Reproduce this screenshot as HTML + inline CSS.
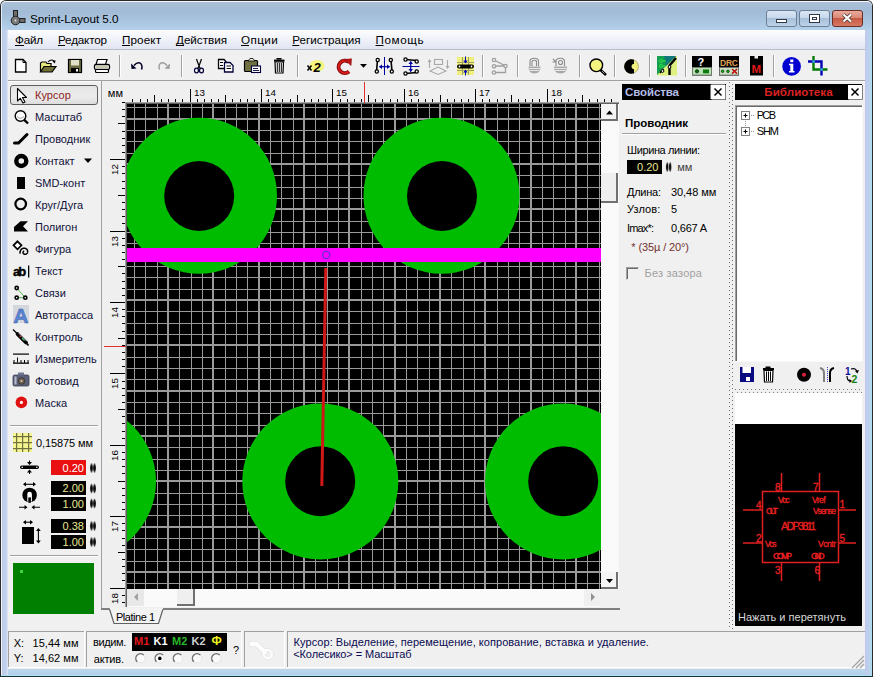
<!DOCTYPE html>
<html><head><meta charset="utf-8">
<style>
*{margin:0;padding:0;box-sizing:border-box}
html,body{width:873px;height:677px;overflow:hidden;background:#fff}
body{position:relative;font-family:"Liberation Sans",sans-serif;font-size:11px;color:#000}
.a{position:absolute}
svg{position:absolute;left:0;top:0;overflow:visible}
text{font-family:"Liberation Sans",sans-serif}
.wbtn{position:absolute;top:10px;height:17px;border:1px solid #6d7f94;border-radius:3px;background:linear-gradient(#d9e6f5 0%,#c8d9ed 45%,#a8bfd9 50%,#bdd3ea 100%)}
</style></head><body>
<div class="a" style="left:0;top:0;width:873px;height:677px;background:#bad2ea;border:1px solid #2b2b2b;border-bottom:none;border-radius:6px 6px 0 0"></div>
<div class="a" style="left:1px;top:1px;width:871px;height:29px;background:linear-gradient(#abc0d7 0%,#a2bbd6 35%,#a9c4df 65%,#b5d0eb 100%);border-radius:5px 5px 0 0;border-top:1px solid #f4f8fc;border-left:1px solid #e4eef8"></div>
<div class="a" style="left:1px;top:669px;width:871px;height:8px;background:linear-gradient(#bcd6ee,#b0cce8)"></div>
<div class="a" style="left:1px;top:675px;width:871px;height:1px;background:#a4e4f0"></div>
<div class="a" style="left:0;top:676px;width:873px;height:1px;background:#203038"></div>
<div class="a" style="left:1px;top:30px;width:7px;height:645px;background:linear-gradient(to right,#f0f6fc 0%,#f0f6fc 14%,#bccae8 15%,#c6d4ee 80%,#e4ecf8 100%)"></div>
<div class="a" style="left:865px;top:30px;width:7px;height:645px;background:linear-gradient(to right,#c2c8ea 0%,#bcd0ee 50%,#b0dcee 100%)"></div>
<div class="wbtn" style="left:766px;width:31px"><div class="a" style="left:9px;top:8px;width:11px;height:4px;background:#fff;border:1px solid #303a48"></div></div>
<div class="wbtn" style="left:799px;width:31px"><div class="a" style="left:9px;top:3px;width:11px;height:9px;border:1px solid #303a48;background:#fff"><div class="a" style="left:2px;top:2px;width:5px;height:3px;border:1px solid #303a48"></div></div></div>
<div class="wbtn" style="left:832px;width:31px;border-color:#6b2e25;background:linear-gradient(#eaaa9c 0%,#d98a78 45%,#c65a44 50%,#d77a64 100%)"><svg width="29" height="15" viewBox="0 0 29 15"><path d="M10.5 3.5 L18 10.5 M18 3.5 L10.5 10.5" stroke="#40302c" stroke-width="3.6"/><path d="M10.5 3.5 L18 10.5 M18 3.5 L10.5 10.5" stroke="#fff" stroke-width="2.2"/></svg></div>
<div class="a" style="left:8px;top:30px;width:857px;height:20px;background:linear-gradient(#fdfdfe 0%,#f0f2f9 45%,#dfe4f1 100%)"></div>
<div class="a" style="left:8px;top:49px;width:857px;height:1px;background:#b9bdc8"></div>
<div class="a" style="left:8px;top:50px;width:857px;height:619px;background:#f0f0f0"></div>
<svg width="40" height="30" viewBox="0 0 40 30">
<rect x="13.5" y="10.5" width="4" height="8" fill="#6c6c6c" stroke="#202020" stroke-width="1"/>
<rect x="18" y="18.5" width="7" height="4" fill="#6c6c6c" stroke="#202020" stroke-width="1"/>
<circle cx="15.5" cy="20.5" r="4.3" fill="#7a7a7a" stroke="#202020" stroke-width="1"/>
<circle cx="15.5" cy="20.5" r="0.9" fill="#e0e0e0"/>
</svg>
<svg class="a" style="left:0;top:0" width="873" height="81" viewBox="0 0 873 81">
<!-- separators -->
<g fill="#a0a0a0">
<rect x="119" y="55" width="1" height="22"/><rect x="181" y="55" width="1" height="22"/><rect x="297" y="55" width="1" height="22"/>
<rect x="482" y="55" width="1" height="22"/><rect x="517" y="55" width="1" height="22"/><rect x="579" y="55" width="1" height="22"/>
<rect x="614" y="55" width="1" height="22"/><rect x="649" y="55" width="1" height="22"/><rect x="685" y="55" width="1" height="22"/>
<rect x="773" y="55" width="1" height="22"/>
</g>
<g fill="#fff">
<rect x="120" y="55" width="1" height="22"/><rect x="182" y="55" width="1" height="22"/><rect x="298" y="55" width="1" height="22"/>
<rect x="483" y="55" width="1" height="22"/><rect x="518" y="55" width="1" height="22"/><rect x="580" y="55" width="1" height="22"/>
<rect x="615" y="55" width="1" height="22"/><rect x="650" y="55" width="1" height="22"/><rect x="686" y="55" width="1" height="22"/>
<rect x="774" y="55" width="1" height="22"/>
</g>
<!-- new -->
<path d="M15.5 59.5 H23 L26 62.5 V72 H15.5 Z" fill="#fff" stroke="#000" stroke-width="1.3"/>
<path d="M23 59.5 V62.5 H26" fill="none" stroke="#000" stroke-width="1"/>
<!-- open -->
<path d="M40.5 72 V63 L42 62 H46 L47 63.5 H51 V67" fill="#e8e880" stroke="#000" stroke-width="1.2"/>
<path d="M40.5 72 L44 66.5 H56 L52 72 Z" fill="#707038" stroke="#000" stroke-width="1.2"/>
<path d="M48 62 Q51 58.5 54 61" fill="none" stroke="#000" stroke-width="1.1"/>
<path d="M52.5 61.5 L55.5 60 L55 63.5 Z" fill="#000"/>
<!-- save -->
<rect x="68.5" y="59.5" width="13" height="13" fill="#6c6c40" stroke="#000" stroke-width="1.2"/>
<rect x="71" y="60" width="8" height="5.5" fill="#e0e0c8"/>
<rect x="71" y="68" width="8" height="4.5" fill="#000"/>
<rect x="76" y="69" width="2" height="2.5" fill="#fff"/>
<!-- print -->
<path d="M97.5 59.5 H107 L105.5 64.5 H96 Z" fill="#fff" stroke="#000" stroke-width="1.2"/>
<rect x="94.5" y="64.5" width="15" height="5" rx="1.5" fill="#fff" stroke="#000" stroke-width="1.3"/>
<rect x="96" y="66" width="12" height="2" fill="#c8c8a8"/>
<rect x="95.5" y="69.5" width="13" height="3" rx="1" fill="#fff" stroke="#000" stroke-width="1.2"/>
<!-- undo -->
<path d="M134 65.5 Q137 62 140 63 Q143 65 141.5 69.5" fill="none" stroke="#000028" stroke-width="1.5"/>
<path d="M131 63.5 L131.5 69 L136.5 68.5 Z" fill="#000028"/>
<!-- redo (gray) -->
<path d="M167 65.5 Q164 62 161 63 Q158 65 159.5 69.5" fill="none" stroke="#9a9a9a" stroke-width="1.4"/>
<path d="M170 63.5 L169.5 69 L164.5 68.5 Z" fill="#9a9a9a"/>
<!-- cut -->
<path d="M196.5 59 L199 66 L201.5 59 M199 66 L197.5 69 M199 66 L200.5 69" fill="none" stroke="#000" stroke-width="1.2"/>
<ellipse cx="196.5" cy="70.5" rx="2" ry="2.3" fill="none" stroke="#00003a" stroke-width="1.2"/>
<ellipse cx="201.5" cy="70.5" rx="2" ry="2.3" fill="none" stroke="#00003a" stroke-width="1.2"/>
<!-- copy -->
<path d="M218.5 59.5 H224 L226 61.5 V68.5 H218.5 Z" fill="#fff" stroke="#000" stroke-width="1.3"/>
<path d="M224.5 62.5 H230 L233 65.5 V72 H224.5 Z" fill="#fff" stroke="#00003a" stroke-width="1.3"/>
<path d="M220 62.5 H223 M220 65.5 H223 M226.5 66 H231 M226.5 68.5 H231" stroke="#000" stroke-width="1"/>
<!-- paste -->
<rect x="244.5" y="60.5" width="13" height="11" rx="1" fill="#707040" stroke="#000" stroke-width="1.2"/>
<path d="M248 61 L250 58.5 L253 58.5 L255 61 Z" fill="#e8e8d0" stroke="#000" stroke-width="0.8"/>
<rect x="251.5" y="66" width="9" height="6.5" fill="#fff" stroke="#00003a" stroke-width="1.1"/>
<path d="M253 68.5 H258 M253 70.5 H259" stroke="#00003a" stroke-width="0.9"/>
<!-- trash -->
<rect x="276.5" y="58" width="5" height="1.6" fill="#000"/>
<rect x="274" y="59.6" width="10.5" height="2" fill="#000"/>
<path d="M275 62 H283.5 L283 73 H275.5 Z" fill="#fff" stroke="#000" stroke-width="1.2"/>
<path d="M277.3 63 V72 M279.3 63 V72 M281.3 63 V72" stroke="#000" stroke-width="1"/>
<!-- x2 -->
<ellipse cx="317" cy="66" rx="7.5" ry="6" fill="#f6f66a" opacity="0.85"/>
<path d="M307.5 65.5 L311.5 70.5 M311.5 65.5 L307.5 70.5" stroke="#000" stroke-width="1.5"/>
<text x="313.5" y="71.8" font-family="Liberation Sans" font-size="13" font-weight="bold" font-style="italic" fill="#000" textLength="9.5">2</text>
<!-- rotate -->
<path d="M348.6 62 A6.2 6.2 0 1 0 349 71.5" fill="none" stroke="#8a0c0c" stroke-width="4"/>
<path d="M348.6 62 A6.2 6.2 0 1 0 349 71.5" fill="none" stroke="#d81c1c" stroke-width="1.8"/>
<path d="M344.5 59.5 L351.5 58.8 L351 65.5 Z" fill="#c01414" stroke="#8a0c0c" stroke-width="0.6"/>
<path d="M360 64 H367 L363.5 67.8 Z" fill="#000"/>
<!-- mirror H -->
<rect x="384" y="57" width="1" height="18" fill="#0000a0"/>
<path d="M377.5 60 L376.5 71.5 M391 60 L392 71.5" stroke="#000" stroke-width="1.6"/>
<g fill="#fff" stroke="#000" stroke-width="1.3"><circle cx="377.7" cy="60" r="1.6"/><circle cx="376.8" cy="71.5" r="1.6"/><circle cx="390.8" cy="60" r="1.6"/><circle cx="391.8" cy="71.5" r="1.6"/></g>
<path d="M379.5 66.7 H389.5" stroke="#0000a0" stroke-width="1.2"/>
<path d="M379 66.7 L382 64.5 V69 Z M390 66.7 L387 64.5 V69 Z" fill="#0000a0"/>
<!-- mirror V -->
<rect x="402.5" y="66" width="17" height="1" fill="#0000a0"/>
<path d="M405.5 59.5 L416.5 60.5 M405.5 73.5 L416.5 72.5" stroke="#000" stroke-width="1.6"/>
<g fill="#fff" stroke="#000" stroke-width="1.3"><circle cx="405.5" cy="59.5" r="1.6"/><circle cx="416.7" cy="61.5" r="1.6"/><circle cx="405.5" cy="73.5" r="1.6"/><circle cx="416.7" cy="71.5" r="1.6"/></g>
<path d="M410.7 61.5 V71.5" stroke="#0000a0" stroke-width="1.2"/>
<path d="M410.7 61 L408.5 64 H413 Z M410.7 72 L408.5 69 H413 Z" fill="#0000a0"/>
<!-- faded layers -->
<g fill="none" stroke="#a8a8a8" stroke-width="1.1">
<rect x="434.5" y="59.5" width="8" height="5"/>
<path d="M430 71 L438 67 L446 71 L438 74.5 Z"/>
<path d="M429.5 60 V68 M447.5 60 V68"/>
</g>
<path d="M427.5 62 L429.5 59 L431.5 62 Z M445.5 66 L447.5 69 L449.5 66 Z" fill="#a8a8a8"/>
<!-- align -->
<rect x="457" y="57" width="17" height="18" fill="#f0f080"/>
<g fill="#a0a060"><rect x="462" y="57" width="1" height="18"/><rect x="468" y="57" width="1" height="18"/><rect x="457" y="62" width="17" height="1"/><rect x="457" y="70" width="17" height="1"/></g>
<rect x="457" y="64.5" width="17" height="4" rx="2" fill="#000"/>
<circle cx="459.5" cy="66.5" r="0.9" fill="#fff"/><circle cx="471.5" cy="66.5" r="0.9" fill="#fff"/>
<path d="M465.5 56.5 V61 M465.5 72 V75.5" stroke="#0000c0" stroke-width="1"/>
<path d="M463.3 60.5 H467.7 L465.5 63.5 Z M463.3 72.5 H467.7 L465.5 69.5 Z" fill="#0000c0"/>
<!-- faded net -->
<g fill="none" stroke="#a0a0a0" stroke-width="1.3">
<path d="M494 60 L505.5 66 V72.5 H494 M494 66 H505.5"/>
<circle cx="494" cy="60" r="1.7" fill="#eee"/><circle cx="494" cy="66.3" r="1.7" fill="#eee"/><circle cx="494" cy="72.5" r="1.7" fill="#eee"/><circle cx="505.5" cy="66" r="1.6" fill="#eee"/>
</g>
<!-- lock -->
<g fill="none" stroke="#8a8a8a" stroke-width="1.1">
<path d="M530 66 V61.5 Q530 58.3 534.3 58.3 Q538.5 58.3 538.5 61.5 V66"/>
<path d="M532 66 V62 Q532 60.2 534.3 60.2 Q536.5 60.2 536.5 62 V66"/>
</g>
<path d="M528.5 66.5 H540.5 Q540.5 73.5 534.5 73.5 Q528.5 73.5 528.5 66.5 Z" fill="#a8a8a8"/>
<path d="M529 68.5 H540 M529.5 70.5 H539.5" stroke="#eee" stroke-width="0.9"/>
<!-- unlock -->
<g fill="none" stroke="#8a8a8a" stroke-width="1.1">
<path d="M556 66 V61.5 Q556 58.3 560.3 58.3 Q564.5 58.3 564.5 61.5 V66"/>
<circle cx="560.5" cy="62.5" r="2"/>
<path d="M553 59 L556 62 M552.5 62 L555.5 62"/>
</g>
<path d="M554 66.5 H567 Q567 73.5 560.5 73.5 Q554 73.5 554 66.5 Z" fill="#a8a8a8"/>
<path d="M554.5 68.5 H566.5 M555 70.5 H566" stroke="#eee" stroke-width="0.9"/>
<!-- zoom -->
<circle cx="596.3" cy="65.3" r="6.3" fill="#f4f480" stroke="#000" stroke-width="1.4"/>
<path d="M600.5 70 L606 75" stroke="#000" stroke-width="2.6"/>
<path d="M602 71 L604.5 73.5" stroke="#bbb" stroke-width="0.8"/>
<!-- contrast -->
<circle cx="631.5" cy="66.5" r="6.9" fill="#f0f080" stroke="#a0a060" stroke-width="0.8"/>
<path d="M634 59.64 A7.3 7.3 0 1 0 634 73.36 Z" fill="#000"/>
<circle cx="634.3" cy="66.5" r="2.7" fill="#f0f080"/>
<!-- autoroute -->
<path d="M657 56 H677 V75.5 H657 Z" fill="#e0f080"/>
<path d="M657 56 H676 L657 75 Z" fill="#14a050"/>
<path d="M664 56 H676 L666 66 Z" fill="#107878"/>
<g fill="none" stroke="#30e040" stroke-width="1"><circle cx="661" cy="61" r="1.5"/><circle cx="661" cy="66" r="1.5"/><path d="M662.5 61 H666 M662.5 66 H665"/></g>
<path d="M676 58 L669.5 65.5 V75" stroke="#000" stroke-width="2.4" fill="none"/>
<path d="M660 73 L663.5 69" stroke="#000" stroke-width="1.6"/>
<circle cx="669.5" cy="67" r="1.4" fill="#fff" stroke="#000" stroke-width="1"/>
<circle cx="662.5" cy="71" r="1.4" fill="#fff" stroke="#000" stroke-width="1"/>
<!-- ? -->
<rect x="692" y="56" width="20" height="19.5" fill="#000"/>
<rect x="692.5" y="67.5" width="19" height="7.5" fill="#b8e0b0" stroke="#708070" stroke-width="0.8"/>
<text x="697.5" y="66" font-family="Liberation Sans" font-size="11" font-weight="bold" fill="#fff">?</text>
<circle cx="697" cy="71.3" r="1.7" fill="#0a6a0a" stroke="#000" stroke-width="0.5"/>
<rect x="703" y="69.5" width="6" height="3.8" fill="#0a7a0a"/>
<!-- DRC -->
<rect x="719" y="56" width="20" height="19.5" fill="#000"/>
<rect x="719.5" y="67.5" width="19" height="7.5" fill="#c8e0c0" stroke="#707070" stroke-width="0.8"/>
<text x="720" y="65.5" font-family="Liberation Mono" font-size="8.5" font-weight="bold" fill="#e0a050" textLength="18">DRC</text>
<circle cx="722.6" cy="71.3" r="1.3" fill="#10c010" stroke="#000" stroke-width="0.6"/>
<circle cx="728" cy="71.3" r="1.3" fill="#10c010" stroke="#000" stroke-width="0.6"/>
<path d="M732 69 L737 73.6 M737 69 L732 73.6" stroke="#c01010" stroke-width="1.6"/>
<!-- M -->
<path d="M750 56 H754.5 V58.5 H758 V56 H763 V75.5 H750 Z" fill="#000"/>
<text x="751.5" y="72.5" font-family="Liberation Sans" font-size="11.5" font-weight="bold" fill="#e01818" textLength="10">M</text>
<!-- info -->
<circle cx="791.6" cy="66.4" r="9.3" fill="#0000d0"/>
<rect x="790.3" y="59.5" width="3" height="2.7" fill="#fff"/>
<path d="M789 63.8 H793.3 V71 H794.5 V72.5 H789 V71 H790.3 V65.3 H789 Z" fill="#fff"/>
<!-- crop -->
<path d="M813.5 56 V69.5 H827.5" fill="none" stroke="#007a00" stroke-width="2.4"/>
<path d="M808 61.5 H821.5 V75.5" fill="none" stroke="#0000b0" stroke-width="2.4"/>
<rect x="812.3" y="60.3" width="2.4" height="2.4" fill="#40c0e0"/>
<rect x="820.3" y="68.3" width="2.4" height="2.4" fill="#40c0e0"/>
</svg>
<div class="a" style="left:8px;top:80px;width:857px;height:1px;background:#a0a0a0"></div>
<div class="a" style="left:8px;top:81px;width:857px;height:1px;background:#fcfcfc"></div>
<div class="a" style="left:10px;top:85px;width:88px;height:20px;border:1px solid #5e5e5e;border-radius:3px;background:linear-gradient(#e4e4e4,#ececec 60%,#dcdcdc)"></div>
<svg class="a" style="left:0;top:0" width="101" height="631" viewBox="0 0 101 631">
<!-- cursor -->
<path d="M17.5 88.5 V101 L20.3 98.3 L23 103 L25 102 L22.5 97.5 H26.5 Z" fill="#fff" stroke="#000" stroke-width="1.1" stroke-linejoin="round"/>
<!-- zoom -->
<circle cx="20.5" cy="116" r="5.3" fill="#fff" stroke="#000" stroke-width="1.4"/>
<path d="M17 116.5 Q20.5 120 24 116.5" fill="none" stroke="#a0a0a0" stroke-width="1"/>
<path d="M24.3 119.8 L28 123.5" stroke="#000" stroke-width="2.4"/>
<!-- wire -->
<path d="M14.5 143 H18.5 L27 134.5" fill="none" stroke="#000" stroke-width="3" stroke-linecap="round"/>
<!-- contact -->
<circle cx="21.3" cy="161" r="5" fill="none" stroke="#000" stroke-width="4.4"/>
<path d="M84 158.5 H92 L88 163 Z" fill="#000"/>
<!-- smd -->
<rect x="17" y="177" width="8" height="12" fill="#000"/>
<!-- circle -->
<circle cx="20.7" cy="204" r="5.3" fill="none" stroke="#000" stroke-width="2.2"/>
<!-- polygon -->
<path d="M14 231.5 V227 L20.5 221.3 H28 L23 226.3 L28 231.5 Z" fill="#000"/>
<!-- figure -->
<path d="M17.5 241.3 L21.5 245.3 L17.5 249.3 L13.5 245.3 Z" fill="#fff" stroke="#000" stroke-width="1.7"/>
<path d="M24.29 251.15 L24.16 251.15 L24.01 251.16 L23.86 251.20 L23.72 251.26 L23.57 251.35 L23.44 251.46 L23.32 251.60 L23.21 251.76 L23.13 251.94 L23.07 252.13 L23.04 252.35 L23.04 252.57 L23.07 252.80 L23.14 253.02 L23.24 253.25 L23.37 253.47 L23.54 253.67 L23.74 253.85 L23.97 254.01 L24.22 254.13 L24.50 254.23 L24.80 254.28 L25.11 254.30 L25.43 254.27 L25.75 254.20 L26.06 254.09 L26.36 253.92 L26.65 253.72 L26.91 253.47 L27.14 253.18 L27.33 252.86 L27.48 252.51 L27.59 252.13 L27.64 251.73 L27.64 251.33 L27.59 250.91 L27.48 250.50 L27.31 250.10 L27.08 249.72 L26.81 249.37 L26.48 249.05 L26.10 248.77 L25.69 248.54 L25.24 248.37 L24.76 248.25 L24.27 248.20 L23.76 248.22 L23.25 248.30 L22.75 248.45 L22.27 248.67 L21.81 248.96 L21.39 249.30 L21.01 249.71 L20.68 250.17 L20.42 250.68 L20.22 251.23 L20.09 251.80 L20.04 252.40 L20.07 253.00 L20.18 253.61" fill="none" stroke="#000" stroke-width="1.5"/>
<!-- text -->
<text x="12.9" y="275.6" font-family="Liberation Sans" font-size="13" font-weight="bold" fill="#000" stroke="#000" stroke-width="0.4" textLength="13.3">ab</text>
<rect x="28" y="265.5" width="1.3" height="12" fill="#000"/>
<!-- links -->
<path d="M16.7 288 L25.3 297.7 M16.7 297.7 H25.3" stroke="#50c050" stroke-width="1"/>
<g fill="#fff" stroke="#000" stroke-width="1.6"><circle cx="16.7" cy="288" r="1.6"/><circle cx="16.7" cy="297.7" r="1.6"/><circle cx="25.3" cy="297.7" r="1.6"/></g>
<!-- autotrace -->
<rect x="13" y="305" width="16" height="18" fill="#d4d8de"/>
<text x="13.2" y="322.7" font-family="Liberation Sans" font-size="21" font-weight="bold" fill="#5a86d6" stroke="#3a5aa8" stroke-width="0.5" textLength="15.3">A</text>
<!-- kontrol -->
<path d="M13 329.5 L18 334.5" stroke="#000" stroke-width="1.3"/>
<path d="M17.5 334 L26 342.5" stroke="#000" stroke-width="3.8" stroke-linecap="round"/>
<path d="M18.5 333 L26.5 341" stroke="#f0f0f0" stroke-width="0.7"/>
<path d="M22 338 L24.5 340.5" stroke="#50c070" stroke-width="1.3"/>
<circle cx="20.3" cy="336.3" r="0.9" fill="#c03030"/>
<path d="M26 342.5 L28.5 345.5" stroke="#000" stroke-width="1.6"/>
<!-- measure -->
<rect x="13" y="353.5" width="16" height="1.2" fill="#000"/>
<rect x="13" y="362.5" width="16" height="1.3" fill="#000"/>
<g fill="#000"><rect x="13.5" y="360" width="1" height="3"/><rect x="17" y="357.5" width="1" height="5"/><rect x="20.5" y="360" width="1" height="3"/><rect x="24" y="360" width="1" height="3"/><rect x="27.5" y="360" width="1" height="3"/></g>
<!-- camera -->
<rect x="13" y="375" width="16" height="11" rx="1.5" fill="#5a6078" stroke="#3a3e50" stroke-width="0.8"/>
<rect x="18" y="372.5" width="6" height="3" fill="#707690"/>
<rect x="14.5" y="376.5" width="2" height="8" fill="#b8bccc"/>
<circle cx="21.5" cy="381" r="3.3" fill="#706050" stroke="#403830" stroke-width="1"/>
<circle cx="21.5" cy="381" r="1" fill="#d0c8c0"/>
<!-- mask -->
<circle cx="21.4" cy="402.4" r="5.8" fill="#e01010"/>
<circle cx="21.4" cy="402.4" r="1.6" fill="#fff"/>
</svg>
<svg width="873" height="677" viewBox="0 0 873 677">
<!-- left panel bottom -->
<rect x="10" y="425" width="88" height="1" fill="#a0a0a0"/><rect x="10" y="426" width="88" height="1" fill="#fff"/>
<rect x="13" y="433" width="19" height="19" fill="#f4f490"/>
<g fill="#707040"><rect x="16" y="433" width="1.2" height="19"/><rect x="22" y="433" width="1.2" height="19"/><rect x="28" y="433" width="1.2" height="19"/>
<rect x="13" y="436" width="19" height="1.2"/><rect x="13" y="442" width="19" height="1.2"/><rect x="13" y="448" width="19" height="1.2"/></g>
<!-- width icon -->
<rect x="20" y="465.5" width="19" height="3.6" rx="1.8" fill="#000"/>
<circle cx="22.2" cy="467.3" r="0.8" fill="#fff"/><circle cx="36.8" cy="467.3" r="0.8" fill="#fff"/>
<path d="M29.5 460.5 V463.5 M29.5 470.5 V474" stroke="#000" stroke-width="1"/>
<path d="M27 462 H32 L29.5 465 Z M27 472.5 H32 L29.5 469.5 Z" fill="#000"/>
<!-- contact icon -->
<path d="M24 484.3 H35" stroke="#000" stroke-width="1.1"/>
<path d="M23 484.3 L26 482 V486.6 Z M36 484.3 L33 482 V486.6 Z" fill="#000"/>
<circle cx="29.6" cy="495" r="7.3" fill="#000"/>
<rect x="27.3" y="491.8" width="4.6" height="10.6" rx="2.2" fill="#fff"/>
<rect x="28.3" y="497.4" width="2.6" height="5.4" fill="#000"/>
<path d="M19 507.3 H26 M33 507.3 H40" stroke="#000" stroke-width="1.1"/>
<path d="M27.5 507.3 L24.5 505 V509.6 Z M31.5 507.3 L34.5 505 V509.6 Z" fill="#000"/>
<!-- smd icon -->
<path d="M24 522.2 H32" stroke="#000" stroke-width="1.1"/>
<path d="M23 522.2 L26 520 V524.4 Z M33 522.2 L30 520 V524.4 Z" fill="#000"/>
<rect x="22" y="527" width="12" height="17" fill="#000"/>
<path d="M38.4 529 V542" stroke="#000" stroke-width="1.1"/>
<path d="M38.4 528 L36 531 H40.8 Z M38.4 543.5 L36 540.5 H40.8 Z" fill="#000"/>
<!-- value boxes -->
<rect x="51" y="460" width="35" height="15" fill="#e81010"/>
<rect x="51" y="481" width="35" height="14" fill="#000"/>
<rect x="51" y="497" width="35" height="14" fill="#000"/>
<rect x="51" y="519" width="35" height="14" fill="#000"/>
<rect x="51" y="535" width="35" height="14" fill="#000"/>
<defs><radialGradient id="spg" cx="0.5" cy="0.5" r="0.5"><stop offset="0" stop-color="#000"/><stop offset="0.6" stop-color="#202020"/><stop offset="1" stop-color="#b0b0b0"/></radialGradient></defs><ellipse cx="91.5" cy="468" rx="1.6" ry="5" fill="url(#spg)"/><ellipse cx="94.5" cy="468" rx="1.6" ry="5" fill="url(#spg)"/><ellipse cx="91.5" cy="488.5" rx="1.6" ry="5" fill="url(#spg)"/><ellipse cx="94.5" cy="488.5" rx="1.6" ry="5" fill="url(#spg)"/><ellipse cx="91.5" cy="503.5" rx="1.6" ry="5" fill="url(#spg)"/><ellipse cx="94.5" cy="503.5" rx="1.6" ry="5" fill="url(#spg)"/><ellipse cx="91.5" cy="526" rx="1.6" ry="5" fill="url(#spg)"/><ellipse cx="94.5" cy="526" rx="1.6" ry="5" fill="url(#spg)"/><ellipse cx="91.5" cy="542" rx="1.6" ry="5" fill="url(#spg)"/><ellipse cx="94.5" cy="542" rx="1.6" ry="5" fill="url(#spg)"/>
<rect x="10" y="555" width="88" height="1" fill="#a0a0a0"/><rect x="10" y="556" width="88" height="1" fill="#fff"/>
<rect x="13" y="563" width="81" height="51" fill="#007f00"/>
<rect x="20" y="570" width="3" height="3" fill="#40d040"/>
</svg>
<svg width="873" height="677" viewBox="0 0 873 677">
<defs>
<clipPath id="cv"><rect x="127" y="104" width="474" height="485"/></clipPath>
<pattern id="dith" width="2" height="2" patternUnits="userSpaceOnUse"><rect width="2" height="2" fill="#f6f6f6"/><rect width="1" height="1" fill="#fdfdfd"/><rect x="1" y="1" width="1" height="1" fill="#fdfdfd"/></pattern>
</defs>
<!-- panel bg -->
<rect x="101" y="81" width="519" height="528" fill="#efefef"/>
<rect x="101" y="81" width="1" height="528" fill="#a0a0a0"/>
<rect x="101" y="608" width="519" height="2" fill="#808080"/>
<!-- rulers -->
<g fill="#000"><rect x="132" y="99" width="1" height="3"/><rect x="140" y="99" width="1" height="3"/><rect x="147" y="99" width="1" height="3"/><rect x="154" y="95" width="1" height="7"/><rect x="161" y="99" width="1" height="3"/><rect x="168" y="99" width="1" height="3"/><rect x="175" y="99" width="1" height="3"/><rect x="182" y="99" width="1" height="3"/><rect x="190" y="89" width="1" height="13"/><text x="194" y="96" font-size="9.8">13</text><rect x="197" y="99" width="1" height="3"/><rect x="204" y="99" width="1" height="3"/><rect x="211" y="99" width="1" height="3"/><rect x="218" y="99" width="1" height="3"/><rect x="225" y="95" width="1" height="7"/><rect x="232" y="99" width="1" height="3"/><rect x="240" y="99" width="1" height="3"/><rect x="247" y="99" width="1" height="3"/><rect x="254" y="99" width="1" height="3"/><rect x="261" y="89" width="1" height="13"/><text x="265" y="96" font-size="9.8">14</text><rect x="268" y="99" width="1" height="3"/><rect x="275" y="99" width="1" height="3"/><rect x="282" y="99" width="1" height="3"/><rect x="290" y="99" width="1" height="3"/><rect x="297" y="95" width="1" height="7"/><rect x="304" y="99" width="1" height="3"/><rect x="311" y="99" width="1" height="3"/><rect x="318" y="99" width="1" height="3"/><rect x="325" y="99" width="1" height="3"/><rect x="332" y="89" width="1" height="13"/><text x="336" y="96" font-size="9.8">15</text><rect x="340" y="99" width="1" height="3"/><rect x="347" y="99" width="1" height="3"/><rect x="354" y="99" width="1" height="3"/><rect x="361" y="99" width="1" height="3"/><rect x="368" y="95" width="1" height="7"/><rect x="375" y="99" width="1" height="3"/><rect x="382" y="99" width="1" height="3"/><rect x="390" y="99" width="1" height="3"/><rect x="397" y="99" width="1" height="3"/><rect x="404" y="89" width="1" height="13"/><text x="408" y="96" font-size="9.8">16</text><rect x="411" y="99" width="1" height="3"/><rect x="418" y="99" width="1" height="3"/><rect x="425" y="99" width="1" height="3"/><rect x="432" y="99" width="1" height="3"/><rect x="440" y="95" width="1" height="7"/><rect x="447" y="99" width="1" height="3"/><rect x="454" y="99" width="1" height="3"/><rect x="461" y="99" width="1" height="3"/><rect x="468" y="99" width="1" height="3"/><rect x="475" y="89" width="1" height="13"/><text x="479" y="96" font-size="9.8">17</text><rect x="482" y="99" width="1" height="3"/><rect x="489" y="99" width="1" height="3"/><rect x="497" y="99" width="1" height="3"/><rect x="504" y="99" width="1" height="3"/><rect x="511" y="95" width="1" height="7"/><rect x="518" y="99" width="1" height="3"/><rect x="525" y="99" width="1" height="3"/><rect x="532" y="99" width="1" height="3"/><rect x="539" y="99" width="1" height="3"/><rect x="547" y="89" width="1" height="13"/><text x="551" y="96" font-size="9.8">18</text><rect x="554" y="99" width="1" height="3"/><rect x="561" y="99" width="1" height="3"/><rect x="568" y="99" width="1" height="3"/><rect x="575" y="99" width="1" height="3"/><rect x="582" y="95" width="1" height="7"/><rect x="589" y="99" width="1" height="3"/><rect x="597" y="99" width="1" height="3"/><rect x="604" y="99" width="1" height="3"/><rect x="611" y="99" width="1" height="3"/><rect x="122" y="102" width="3" height="1"/><rect x="122" y="109" width="3" height="1"/><rect x="122" y="116" width="3" height="1"/><rect x="118" y="123" width="7" height="1"/><rect x="122" y="131" width="3" height="1"/><rect x="122" y="138" width="3" height="1"/><rect x="122" y="145" width="3" height="1"/><rect x="122" y="152" width="3" height="1"/><rect x="110" y="159" width="15" height="1"/><text transform="translate(117.5 175) rotate(-90)" font-size="9.8">12</text><rect x="122" y="166" width="3" height="1"/><rect x="122" y="173" width="3" height="1"/><rect x="122" y="181" width="3" height="1"/><rect x="122" y="188" width="3" height="1"/><rect x="118" y="195" width="7" height="1"/><rect x="122" y="202" width="3" height="1"/><rect x="122" y="209" width="3" height="1"/><rect x="122" y="216" width="3" height="1"/><rect x="122" y="223" width="3" height="1"/><rect x="110" y="231" width="15" height="1"/><text transform="translate(117.5 247) rotate(-90)" font-size="9.8">13</text><rect x="122" y="238" width="3" height="1"/><rect x="122" y="245" width="3" height="1"/><rect x="122" y="252" width="3" height="1"/><rect x="122" y="259" width="3" height="1"/><rect x="118" y="266" width="7" height="1"/><rect x="122" y="273" width="3" height="1"/><rect x="122" y="281" width="3" height="1"/><rect x="122" y="288" width="3" height="1"/><rect x="122" y="295" width="3" height="1"/><rect x="110" y="302" width="15" height="1"/><text transform="translate(117.5 318) rotate(-90)" font-size="9.8">14</text><rect x="122" y="309" width="3" height="1"/><rect x="122" y="316" width="3" height="1"/><rect x="122" y="323" width="3" height="1"/><rect x="122" y="331" width="3" height="1"/><rect x="118" y="338" width="7" height="1"/><rect x="122" y="345" width="3" height="1"/><rect x="122" y="352" width="3" height="1"/><rect x="122" y="359" width="3" height="1"/><rect x="122" y="366" width="3" height="1"/><rect x="110" y="373" width="15" height="1"/><text transform="translate(117.5 389) rotate(-90)" font-size="9.8">15</text><rect x="122" y="381" width="3" height="1"/><rect x="122" y="388" width="3" height="1"/><rect x="122" y="395" width="3" height="1"/><rect x="122" y="402" width="3" height="1"/><rect x="118" y="409" width="7" height="1"/><rect x="122" y="416" width="3" height="1"/><rect x="122" y="423" width="3" height="1"/><rect x="122" y="431" width="3" height="1"/><rect x="122" y="438" width="3" height="1"/><rect x="110" y="445" width="15" height="1"/><text transform="translate(117.5 461) rotate(-90)" font-size="9.8">16</text><rect x="122" y="452" width="3" height="1"/><rect x="122" y="459" width="3" height="1"/><rect x="122" y="466" width="3" height="1"/><rect x="122" y="473" width="3" height="1"/><rect x="118" y="481" width="7" height="1"/><rect x="122" y="488" width="3" height="1"/><rect x="122" y="495" width="3" height="1"/><rect x="122" y="502" width="3" height="1"/><rect x="122" y="509" width="3" height="1"/><rect x="110" y="516" width="15" height="1"/><text transform="translate(117.5 532) rotate(-90)" font-size="9.8">17</text><rect x="122" y="523" width="3" height="1"/><rect x="122" y="530" width="3" height="1"/><rect x="122" y="538" width="3" height="1"/><rect x="122" y="545" width="3" height="1"/><rect x="118" y="552" width="7" height="1"/><rect x="122" y="559" width="3" height="1"/><rect x="122" y="566" width="3" height="1"/><rect x="122" y="573" width="3" height="1"/><rect x="122" y="580" width="3" height="1"/><rect x="110" y="588" width="15" height="1"/><text transform="translate(117.5 604) rotate(-90)" font-size="9.8">18</text><rect x="122" y="595" width="3" height="1"/><rect x="122" y="602" width="3" height="1"/></g>
<!-- canvas border -->
<rect x="125" y="102" width="494" height="1" fill="#a0a0a0"/>
<rect x="126" y="103" width="493" height="1" fill="#606060"/>
<rect x="125" y="102" width="1" height="505" fill="#a0a0a0"/>
<rect x="126" y="103" width="1" height="504" fill="#606060"/>
<g clip-path="url(#cv)">
<rect x="127" y="104" width="474" height="485" fill="#000"/>
<g fill="#9a9a9a" shape-rendering="crispEdges"><rect x="111" y="104" width="1" height="485"/><rect x="122" y="104" width="2" height="485"/><rect x="134" y="104" width="1" height="485"/><rect x="145" y="104" width="1" height="485"/><rect x="157" y="104" width="1" height="485"/><rect x="167" y="104" width="2" height="485"/><rect x="179" y="104" width="1" height="485"/><rect x="191" y="104" width="1" height="485"/><rect x="202" y="104" width="1" height="485"/><rect x="212" y="104" width="2" height="485"/><rect x="225" y="104" width="1" height="485"/><rect x="236" y="104" width="1" height="485"/><rect x="247" y="104" width="1" height="485"/><rect x="258" y="104" width="2" height="485"/><rect x="270" y="104" width="1" height="485"/><rect x="281" y="104" width="1" height="485"/><rect x="293" y="104" width="1" height="485"/><rect x="303" y="104" width="2" height="485"/><rect x="315" y="104" width="1" height="485"/><rect x="327" y="104" width="1" height="485"/><rect x="338" y="104" width="1" height="485"/><rect x="348" y="104" width="2" height="485"/><rect x="361" y="104" width="1" height="485"/><rect x="372" y="104" width="1" height="485"/><rect x="383" y="104" width="1" height="485"/><rect x="394" y="104" width="2" height="485"/><rect x="406" y="104" width="1" height="485"/><rect x="417" y="104" width="1" height="485"/><rect x="429" y="104" width="1" height="485"/><rect x="439" y="104" width="2" height="485"/><rect x="451" y="104" width="1" height="485"/><rect x="463" y="104" width="1" height="485"/><rect x="474" y="104" width="1" height="485"/><rect x="484" y="104" width="2" height="485"/><rect x="497" y="104" width="1" height="485"/><rect x="508" y="104" width="1" height="485"/><rect x="519" y="104" width="1" height="485"/><rect x="530" y="104" width="2" height="485"/><rect x="542" y="104" width="1" height="485"/><rect x="553" y="104" width="1" height="485"/><rect x="565" y="104" width="1" height="485"/><rect x="575" y="104" width="2" height="485"/><rect x="587" y="104" width="1" height="485"/><rect x="599" y="104" width="1" height="485"/><rect x="127" y="85" width="474" height="1"/><rect x="127" y="96" width="474" height="1"/><rect x="127" y="107" width="474" height="1"/><rect x="127" y="118" width="474" height="2"/><rect x="127" y="130" width="474" height="1"/><rect x="127" y="141" width="474" height="1"/><rect x="127" y="153" width="474" height="1"/><rect x="127" y="163" width="474" height="2"/><rect x="127" y="175" width="474" height="1"/><rect x="127" y="187" width="474" height="1"/><rect x="127" y="198" width="474" height="1"/><rect x="127" y="208" width="474" height="2"/><rect x="127" y="221" width="474" height="1"/><rect x="127" y="232" width="474" height="1"/><rect x="127" y="243" width="474" height="1"/><rect x="127" y="254" width="474" height="2"/><rect x="127" y="266" width="474" height="1"/><rect x="127" y="277" width="474" height="1"/><rect x="127" y="289" width="474" height="1"/><rect x="127" y="299" width="474" height="2"/><rect x="127" y="311" width="474" height="1"/><rect x="127" y="323" width="474" height="1"/><rect x="127" y="334" width="474" height="1"/><rect x="127" y="344" width="474" height="2"/><rect x="127" y="357" width="474" height="1"/><rect x="127" y="368" width="474" height="1"/><rect x="127" y="379" width="474" height="1"/><rect x="127" y="390" width="474" height="2"/><rect x="127" y="402" width="474" height="1"/><rect x="127" y="413" width="474" height="1"/><rect x="127" y="425" width="474" height="1"/><rect x="127" y="435" width="474" height="2"/><rect x="127" y="447" width="474" height="1"/><rect x="127" y="459" width="474" height="1"/><rect x="127" y="470" width="474" height="1"/><rect x="127" y="480" width="474" height="2"/><rect x="127" y="493" width="474" height="1"/><rect x="127" y="504" width="474" height="1"/><rect x="127" y="515" width="474" height="1"/><rect x="127" y="526" width="474" height="2"/><rect x="127" y="538" width="474" height="1"/><rect x="127" y="549" width="474" height="1"/><rect x="127" y="561" width="474" height="1"/><rect x="127" y="571" width="474" height="2"/><rect x="127" y="583" width="474" height="1"/></g>
<g fill="#00bc00">
<circle cx="199" cy="195.7" r="78"/>
<circle cx="441.5" cy="195.7" r="78"/>
<circle cx="78" cy="481.5" r="78"/>
<circle cx="320.3" cy="481.5" r="78"/>
<circle cx="563" cy="481.5" r="78"/>
</g>
<g fill="#000">
<circle cx="199.2" cy="196" r="35"/>
<circle cx="442" cy="196" r="35"/>
<circle cx="320.2" cy="481.2" r="35"/>
<circle cx="563.2" cy="481.2" r="35"/>
</g>
<rect x="127" y="248" width="474" height="14" fill="#ff00ff"/>
<circle cx="326.2" cy="255" r="3.6" fill="none" stroke="#6030d0" stroke-width="1.2"/>
<path d="M325.8 268 L321.8 486" stroke="#d01818" stroke-width="3"/>
</g>
<!-- red cursor marks on rulers -->
<rect x="364" y="82" width="1" height="21" fill="#e03030"/>
<rect x="104" y="346" width="22" height="1" fill="#e03030"/>
<!-- vertical scrollbar -->
<rect x="601" y="104" width="18" height="485" fill="url(#dith)"/>
<rect x="601" y="104" width="17" height="17" fill="#f4f4f4"/>
<rect x="616" y="104" width="2" height="17" fill="#707070"/><rect x="601" y="119" width="17" height="2" fill="#707070"/>
<path d="M606 114.5 H613 L609.5 110.5 Z" fill="#000"/>
<rect x="601" y="173" width="17" height="30" fill="#efefef"/>
<rect x="616" y="173" width="2" height="30" fill="#707070"/><rect x="601" y="201" width="17" height="2" fill="#707070"/>
<rect x="601" y="572" width="17" height="17" fill="#f4f4f4"/>
<rect x="616" y="572" width="2" height="17" fill="#707070"/><rect x="601" y="587" width="17" height="2" fill="#707070"/>
<path d="M606 579 H613 L609.5 583 Z" fill="#000"/>
<!-- horizontal scrollbar -->
<rect x="127" y="589" width="474" height="18" fill="url(#dith)"/>
<rect x="127" y="589" width="17" height="17" fill="#e8e8e8"/>
<path d="M138 593 V601 L134 597 Z" fill="#a0a0a0"/>
<rect x="177" y="589" width="18" height="17" fill="#efefef"/>
<rect x="193" y="589" width="2" height="17" fill="#707070"/><rect x="177" y="604" width="18" height="2" fill="#707070"/>
<rect x="584" y="589" width="17" height="17" fill="#f0f0f0"/>
<path d="M591 593 V601 L595 597 Z" fill="#909090"/>
<rect x="601" y="589" width="18" height="18" fill="#f0f0f0"/>
<!-- tab -->
<path d="M109.5 608 L114 624 H158.5 L163 608 Z" fill="#f3f3f3"/>
<path d="M109.5 609 L114 623.5 H158.5 L163 609" fill="none" stroke="#606060" stroke-width="1.2"/>
<rect x="110.5" y="608" width="52" height="2" fill="#f3f3f3"/>
</svg>
<svg width="873" height="677" viewBox="0 0 873 677">
<!-- properties header -->
<rect x="622" y="84" width="104" height="16" fill="#000"/>
<rect x="711" y="85" width="14" height="14" fill="#fff"/>
<path d="M711 99 V85 H725" fill="none" stroke="#f8f8f8" stroke-width="1"/>
<path d="M711.5 99.5 H725.5 V85" fill="none" stroke="#808080" stroke-width="1"/>
<path d="M714.5 88.5 L721.5 95.5 M721.5 88.5 L714.5 95.5" stroke="#000" stroke-width="1.5"/>
<rect x="622" y="133" width="104" height="1" fill="#a0a0a0"/>
<rect x="622" y="134" width="104" height="1" fill="#fff"/>
<!-- width box -->
<rect x="627" y="160" width="35" height="14" fill="#000"/>
<ellipse cx="667.3" cy="167" rx="1.5" ry="5" fill="url(#spg)"/><ellipse cx="670.2" cy="167" rx="1.5" ry="5" fill="url(#spg)"/>
<!-- checkbox -->
<rect x="626" y="267" width="12" height="12" fill="#f0f0f0"/>
<path d="M627 279 V268 H638" fill="none" stroke="#6a6a6a" stroke-width="2"/>
<path d="M626.5 279.5 V267.5 H638.5" fill="none" stroke="#a0a0a0" stroke-width="1"/>
<!-- splitter dots -->
<g fill="#707070"><rect x="729" y="82" width="1" height="1"/><rect x="732" y="84" width="1" height="1"/><rect x="729" y="86" width="1" height="1"/><rect x="732" y="88" width="1" height="1"/><rect x="729" y="90" width="1" height="1"/><rect x="732" y="92" width="1" height="1"/><rect x="729" y="94" width="1" height="1"/><rect x="732" y="96" width="1" height="1"/><rect x="729" y="98" width="1" height="1"/><rect x="732" y="100" width="1" height="1"/><rect x="729" y="102" width="1" height="1"/><rect x="732" y="104" width="1" height="1"/><rect x="729" y="106" width="1" height="1"/><rect x="732" y="108" width="1" height="1"/><rect x="729" y="110" width="1" height="1"/><rect x="732" y="112" width="1" height="1"/><rect x="729" y="114" width="1" height="1"/><rect x="732" y="116" width="1" height="1"/><rect x="729" y="118" width="1" height="1"/><rect x="732" y="120" width="1" height="1"/><rect x="729" y="122" width="1" height="1"/><rect x="732" y="124" width="1" height="1"/><rect x="729" y="126" width="1" height="1"/><rect x="732" y="128" width="1" height="1"/><rect x="729" y="130" width="1" height="1"/><rect x="732" y="132" width="1" height="1"/><rect x="729" y="134" width="1" height="1"/><rect x="732" y="136" width="1" height="1"/><rect x="729" y="138" width="1" height="1"/><rect x="732" y="140" width="1" height="1"/><rect x="729" y="142" width="1" height="1"/><rect x="732" y="144" width="1" height="1"/><rect x="729" y="146" width="1" height="1"/><rect x="732" y="148" width="1" height="1"/><rect x="729" y="150" width="1" height="1"/><rect x="732" y="152" width="1" height="1"/><rect x="729" y="154" width="1" height="1"/><rect x="732" y="156" width="1" height="1"/><rect x="729" y="158" width="1" height="1"/><rect x="732" y="160" width="1" height="1"/><rect x="729" y="162" width="1" height="1"/><rect x="732" y="164" width="1" height="1"/><rect x="729" y="166" width="1" height="1"/><rect x="732" y="168" width="1" height="1"/><rect x="729" y="170" width="1" height="1"/><rect x="732" y="172" width="1" height="1"/><rect x="729" y="174" width="1" height="1"/><rect x="732" y="176" width="1" height="1"/><rect x="729" y="178" width="1" height="1"/><rect x="732" y="180" width="1" height="1"/><rect x="729" y="182" width="1" height="1"/><rect x="732" y="184" width="1" height="1"/><rect x="729" y="186" width="1" height="1"/><rect x="732" y="188" width="1" height="1"/><rect x="729" y="190" width="1" height="1"/><rect x="732" y="192" width="1" height="1"/><rect x="729" y="194" width="1" height="1"/><rect x="732" y="196" width="1" height="1"/><rect x="729" y="198" width="1" height="1"/><rect x="732" y="200" width="1" height="1"/><rect x="729" y="202" width="1" height="1"/><rect x="732" y="204" width="1" height="1"/><rect x="729" y="206" width="1" height="1"/><rect x="732" y="208" width="1" height="1"/><rect x="729" y="210" width="1" height="1"/><rect x="732" y="212" width="1" height="1"/><rect x="729" y="214" width="1" height="1"/><rect x="732" y="216" width="1" height="1"/><rect x="729" y="218" width="1" height="1"/><rect x="732" y="220" width="1" height="1"/><rect x="729" y="222" width="1" height="1"/><rect x="732" y="224" width="1" height="1"/><rect x="729" y="226" width="1" height="1"/><rect x="732" y="228" width="1" height="1"/><rect x="729" y="230" width="1" height="1"/><rect x="732" y="232" width="1" height="1"/><rect x="729" y="234" width="1" height="1"/><rect x="732" y="236" width="1" height="1"/><rect x="729" y="238" width="1" height="1"/><rect x="732" y="240" width="1" height="1"/><rect x="729" y="242" width="1" height="1"/><rect x="732" y="244" width="1" height="1"/><rect x="729" y="246" width="1" height="1"/><rect x="732" y="248" width="1" height="1"/><rect x="729" y="250" width="1" height="1"/><rect x="732" y="252" width="1" height="1"/><rect x="729" y="254" width="1" height="1"/><rect x="732" y="256" width="1" height="1"/><rect x="729" y="258" width="1" height="1"/><rect x="732" y="260" width="1" height="1"/><rect x="729" y="262" width="1" height="1"/><rect x="732" y="264" width="1" height="1"/><rect x="729" y="266" width="1" height="1"/><rect x="732" y="268" width="1" height="1"/><rect x="729" y="270" width="1" height="1"/><rect x="732" y="272" width="1" height="1"/><rect x="729" y="274" width="1" height="1"/><rect x="732" y="276" width="1" height="1"/><rect x="729" y="278" width="1" height="1"/><rect x="732" y="280" width="1" height="1"/><rect x="729" y="282" width="1" height="1"/><rect x="732" y="284" width="1" height="1"/><rect x="729" y="286" width="1" height="1"/><rect x="732" y="288" width="1" height="1"/><rect x="729" y="290" width="1" height="1"/><rect x="732" y="292" width="1" height="1"/><rect x="729" y="294" width="1" height="1"/><rect x="732" y="296" width="1" height="1"/><rect x="729" y="298" width="1" height="1"/><rect x="732" y="300" width="1" height="1"/><rect x="729" y="302" width="1" height="1"/><rect x="732" y="304" width="1" height="1"/><rect x="729" y="306" width="1" height="1"/><rect x="732" y="308" width="1" height="1"/><rect x="729" y="310" width="1" height="1"/><rect x="732" y="312" width="1" height="1"/><rect x="729" y="314" width="1" height="1"/><rect x="732" y="316" width="1" height="1"/><rect x="729" y="318" width="1" height="1"/><rect x="732" y="320" width="1" height="1"/><rect x="729" y="322" width="1" height="1"/><rect x="732" y="324" width="1" height="1"/><rect x="729" y="326" width="1" height="1"/><rect x="732" y="328" width="1" height="1"/><rect x="729" y="330" width="1" height="1"/><rect x="732" y="332" width="1" height="1"/><rect x="729" y="334" width="1" height="1"/><rect x="732" y="336" width="1" height="1"/><rect x="729" y="338" width="1" height="1"/><rect x="732" y="340" width="1" height="1"/><rect x="729" y="342" width="1" height="1"/><rect x="732" y="344" width="1" height="1"/><rect x="729" y="346" width="1" height="1"/><rect x="732" y="348" width="1" height="1"/><rect x="729" y="350" width="1" height="1"/><rect x="732" y="352" width="1" height="1"/><rect x="729" y="354" width="1" height="1"/><rect x="732" y="356" width="1" height="1"/><rect x="729" y="358" width="1" height="1"/><rect x="732" y="360" width="1" height="1"/><rect x="729" y="362" width="1" height="1"/><rect x="732" y="364" width="1" height="1"/><rect x="729" y="366" width="1" height="1"/><rect x="732" y="368" width="1" height="1"/><rect x="729" y="370" width="1" height="1"/><rect x="732" y="372" width="1" height="1"/><rect x="729" y="374" width="1" height="1"/><rect x="732" y="376" width="1" height="1"/><rect x="729" y="378" width="1" height="1"/><rect x="732" y="380" width="1" height="1"/><rect x="729" y="382" width="1" height="1"/><rect x="732" y="384" width="1" height="1"/><rect x="729" y="386" width="1" height="1"/><rect x="732" y="388" width="1" height="1"/><rect x="729" y="390" width="1" height="1"/><rect x="732" y="392" width="1" height="1"/><rect x="729" y="394" width="1" height="1"/><rect x="732" y="396" width="1" height="1"/><rect x="729" y="398" width="1" height="1"/><rect x="732" y="400" width="1" height="1"/><rect x="729" y="402" width="1" height="1"/><rect x="732" y="404" width="1" height="1"/><rect x="729" y="406" width="1" height="1"/><rect x="732" y="408" width="1" height="1"/><rect x="729" y="410" width="1" height="1"/><rect x="732" y="412" width="1" height="1"/><rect x="729" y="414" width="1" height="1"/><rect x="732" y="416" width="1" height="1"/><rect x="729" y="418" width="1" height="1"/><rect x="732" y="420" width="1" height="1"/><rect x="729" y="422" width="1" height="1"/><rect x="732" y="424" width="1" height="1"/><rect x="729" y="426" width="1" height="1"/><rect x="732" y="428" width="1" height="1"/><rect x="729" y="430" width="1" height="1"/><rect x="732" y="432" width="1" height="1"/><rect x="729" y="434" width="1" height="1"/><rect x="732" y="436" width="1" height="1"/><rect x="729" y="438" width="1" height="1"/><rect x="732" y="440" width="1" height="1"/><rect x="729" y="442" width="1" height="1"/><rect x="732" y="444" width="1" height="1"/><rect x="729" y="446" width="1" height="1"/><rect x="732" y="448" width="1" height="1"/><rect x="729" y="450" width="1" height="1"/><rect x="732" y="452" width="1" height="1"/><rect x="729" y="454" width="1" height="1"/><rect x="732" y="456" width="1" height="1"/><rect x="729" y="458" width="1" height="1"/><rect x="732" y="460" width="1" height="1"/><rect x="729" y="462" width="1" height="1"/><rect x="732" y="464" width="1" height="1"/><rect x="729" y="466" width="1" height="1"/><rect x="732" y="468" width="1" height="1"/><rect x="729" y="470" width="1" height="1"/><rect x="732" y="472" width="1" height="1"/><rect x="729" y="474" width="1" height="1"/><rect x="732" y="476" width="1" height="1"/><rect x="729" y="478" width="1" height="1"/><rect x="732" y="480" width="1" height="1"/><rect x="729" y="482" width="1" height="1"/><rect x="732" y="484" width="1" height="1"/><rect x="729" y="486" width="1" height="1"/><rect x="732" y="488" width="1" height="1"/><rect x="729" y="490" width="1" height="1"/><rect x="732" y="492" width="1" height="1"/><rect x="729" y="494" width="1" height="1"/><rect x="732" y="496" width="1" height="1"/><rect x="729" y="498" width="1" height="1"/><rect x="732" y="500" width="1" height="1"/><rect x="729" y="502" width="1" height="1"/><rect x="732" y="504" width="1" height="1"/><rect x="729" y="506" width="1" height="1"/><rect x="732" y="508" width="1" height="1"/><rect x="729" y="510" width="1" height="1"/><rect x="732" y="512" width="1" height="1"/><rect x="729" y="514" width="1" height="1"/><rect x="732" y="516" width="1" height="1"/><rect x="729" y="518" width="1" height="1"/><rect x="732" y="520" width="1" height="1"/><rect x="729" y="522" width="1" height="1"/><rect x="732" y="524" width="1" height="1"/><rect x="729" y="526" width="1" height="1"/><rect x="732" y="528" width="1" height="1"/><rect x="729" y="530" width="1" height="1"/><rect x="732" y="532" width="1" height="1"/><rect x="729" y="534" width="1" height="1"/><rect x="732" y="536" width="1" height="1"/><rect x="729" y="538" width="1" height="1"/><rect x="732" y="540" width="1" height="1"/><rect x="729" y="542" width="1" height="1"/><rect x="732" y="544" width="1" height="1"/><rect x="729" y="546" width="1" height="1"/><rect x="732" y="548" width="1" height="1"/><rect x="729" y="550" width="1" height="1"/><rect x="732" y="552" width="1" height="1"/><rect x="729" y="554" width="1" height="1"/><rect x="732" y="556" width="1" height="1"/><rect x="729" y="558" width="1" height="1"/><rect x="732" y="560" width="1" height="1"/><rect x="729" y="562" width="1" height="1"/><rect x="732" y="564" width="1" height="1"/><rect x="729" y="566" width="1" height="1"/><rect x="732" y="568" width="1" height="1"/><rect x="729" y="570" width="1" height="1"/><rect x="732" y="572" width="1" height="1"/><rect x="729" y="574" width="1" height="1"/><rect x="732" y="576" width="1" height="1"/><rect x="729" y="578" width="1" height="1"/><rect x="732" y="580" width="1" height="1"/><rect x="729" y="582" width="1" height="1"/><rect x="732" y="584" width="1" height="1"/><rect x="729" y="586" width="1" height="1"/><rect x="732" y="588" width="1" height="1"/><rect x="729" y="590" width="1" height="1"/><rect x="732" y="592" width="1" height="1"/><rect x="729" y="594" width="1" height="1"/><rect x="732" y="596" width="1" height="1"/><rect x="729" y="598" width="1" height="1"/><rect x="732" y="600" width="1" height="1"/><rect x="729" y="602" width="1" height="1"/><rect x="732" y="604" width="1" height="1"/><rect x="729" y="606" width="1" height="1"/><rect x="732" y="608" width="1" height="1"/><rect x="729" y="610" width="1" height="1"/><rect x="732" y="612" width="1" height="1"/><rect x="729" y="614" width="1" height="1"/><rect x="732" y="616" width="1" height="1"/><rect x="729" y="618" width="1" height="1"/><rect x="732" y="620" width="1" height="1"/><rect x="729" y="622" width="1" height="1"/><rect x="732" y="624" width="1" height="1"/><rect x="729" y="626" width="1" height="1"/><rect x="732" y="628" width="1" height="1"/></g>
<!-- library header -->
<rect x="735" y="84" width="127" height="16" fill="#000"/>
<rect x="848" y="85" width="14" height="14" fill="#fff"/>
<path d="M848.5 99.5 H862.5 V85" fill="none" stroke="#808080" stroke-width="1"/>
<path d="M851.5 88.5 L858.5 95.5 M858.5 88.5 L851.5 95.5" stroke="#000" stroke-width="1.5"/>
<!-- tree -->
<rect x="735" y="105" width="128" height="257" fill="#fff"/>
<rect x="735" y="105" width="127" height="1" fill="#a0a0a0"/>
<rect x="735" y="106" width="127" height="1" fill="#696969"/>
<rect x="735" y="105" width="1" height="256" fill="#a0a0a0"/>
<rect x="736" y="106" width="1" height="255" fill="#696969"/>
<rect x="862" y="105" width="1" height="257" fill="#f8f8f8"/>
<rect x="735" y="361" width="128" height="1" fill="#f8f8f8"/>
<rect x="741.5" y="111.5" width="8" height="8" fill="#fff" stroke="#808080" stroke-width="1"/>
<rect x="741.5" y="127.5" width="8" height="8" fill="#fff" stroke="#808080" stroke-width="1"/>
<path d="M743.5 115.5 H747.5 M745.5 113.5 V117.5 M743.5 131.5 H747.5 M745.5 129.5 V133.5" stroke="#000" stroke-width="1.1"/>
<g fill="#909090"><rect x="751" y="115" width="1" height="1"/><rect x="753" y="115" width="1" height="1"/><rect x="751" y="131" width="1" height="1"/><rect x="753" y="131" width="1" height="1"/>
<rect x="745" y="121" width="1" height="1"/><rect x="745" y="123" width="1" height="1"/><rect x="745" y="125" width="1" height="1"/></g>
<!-- library toolbar -->
<rect x="740" y="367" width="14" height="15" fill="#0a0a80"/>
<rect x="742.5" y="367" width="8.5" height="6" fill="#fff"/>
<rect x="746" y="377" width="4" height="4" fill="#fff"/>
<rect x="765.5" y="366.5" width="5" height="1.6" fill="#000"/>
<rect x="763" y="368" width="11" height="2" fill="#000"/>
<path d="M764 370.5 H773 L772.5 382 H764.5 Z" fill="#fff" stroke="#000" stroke-width="1.2"/>
<path d="M766.5 371.5 V381 M768.5 371.5 V381 M770.5 371.5 V381" stroke="#000" stroke-width="1"/>
<circle cx="804" cy="374.7" r="7" fill="#000"/>
<circle cx="804" cy="374.7" r="2" fill="#e02040"/>
<path d="M820 368 Q824 369 824 373 V382" fill="none" stroke="#808080" stroke-width="2"/>
<path d="M834 368 Q830 369 830 373 V382" fill="none" stroke="#000" stroke-width="2"/>
<g fill="#4040c0"><rect x="827" y="367" width="1" height="1"/><rect x="827" y="369" width="1" height="1"/><rect x="827" y="371" width="1" height="1"/><rect x="827" y="373" width="1" height="1"/><rect x="827" y="375" width="1" height="1"/><rect x="827" y="377" width="1" height="1"/><rect x="827" y="379" width="1" height="1"/><rect x="827" y="381" width="1" height="1"/></g>
<text x="845" y="375" font-size="10" font-weight="bold" fill="#1010a0">1</text>
<text x="851.5" y="383" font-size="10.5" font-weight="bold" fill="#108010">2</text>
<path d="M851 369 Q856 367.5 857 372" fill="none" stroke="#000" stroke-width="1.2"/>
<path d="M855 371 L857.5 373.5 L859 370 Z" fill="#000"/>
<path d="M847 376 Q847 381 850.5 381" fill="none" stroke="#000" stroke-width="1.2"/>
<path d="M849.5 379 L852 381 L849.5 383 Z" fill="#000"/>
<!-- dotted separator -->
<g fill="#808080"><rect x="735" y="389" width="1" height="1"/><rect x="737" y="392" width="1" height="1"/><rect x="739" y="389" width="1" height="1"/><rect x="741" y="392" width="1" height="1"/><rect x="743" y="389" width="1" height="1"/><rect x="745" y="392" width="1" height="1"/><rect x="747" y="389" width="1" height="1"/><rect x="749" y="392" width="1" height="1"/><rect x="751" y="389" width="1" height="1"/><rect x="753" y="392" width="1" height="1"/><rect x="755" y="389" width="1" height="1"/><rect x="757" y="392" width="1" height="1"/><rect x="759" y="389" width="1" height="1"/><rect x="761" y="392" width="1" height="1"/><rect x="763" y="389" width="1" height="1"/><rect x="765" y="392" width="1" height="1"/><rect x="767" y="389" width="1" height="1"/><rect x="769" y="392" width="1" height="1"/><rect x="771" y="389" width="1" height="1"/><rect x="773" y="392" width="1" height="1"/><rect x="775" y="389" width="1" height="1"/><rect x="777" y="392" width="1" height="1"/><rect x="779" y="389" width="1" height="1"/><rect x="781" y="392" width="1" height="1"/><rect x="783" y="389" width="1" height="1"/><rect x="785" y="392" width="1" height="1"/><rect x="787" y="389" width="1" height="1"/><rect x="789" y="392" width="1" height="1"/><rect x="791" y="389" width="1" height="1"/><rect x="793" y="392" width="1" height="1"/><rect x="795" y="389" width="1" height="1"/><rect x="797" y="392" width="1" height="1"/><rect x="799" y="389" width="1" height="1"/><rect x="801" y="392" width="1" height="1"/><rect x="803" y="389" width="1" height="1"/><rect x="805" y="392" width="1" height="1"/><rect x="807" y="389" width="1" height="1"/><rect x="809" y="392" width="1" height="1"/><rect x="811" y="389" width="1" height="1"/><rect x="813" y="392" width="1" height="1"/><rect x="815" y="389" width="1" height="1"/><rect x="817" y="392" width="1" height="1"/><rect x="819" y="389" width="1" height="1"/><rect x="821" y="392" width="1" height="1"/><rect x="823" y="389" width="1" height="1"/><rect x="825" y="392" width="1" height="1"/><rect x="827" y="389" width="1" height="1"/><rect x="829" y="392" width="1" height="1"/><rect x="831" y="389" width="1" height="1"/><rect x="833" y="392" width="1" height="1"/><rect x="835" y="389" width="1" height="1"/><rect x="837" y="392" width="1" height="1"/><rect x="839" y="389" width="1" height="1"/><rect x="841" y="392" width="1" height="1"/><rect x="843" y="389" width="1" height="1"/><rect x="845" y="392" width="1" height="1"/><rect x="847" y="389" width="1" height="1"/><rect x="849" y="392" width="1" height="1"/><rect x="851" y="389" width="1" height="1"/><rect x="853" y="392" width="1" height="1"/><rect x="855" y="389" width="1" height="1"/><rect x="857" y="392" width="1" height="1"/><rect x="859" y="389" width="1" height="1"/><rect x="861" y="392" width="1" height="1"/></g>
<!-- preview -->
<rect x="735" y="393" width="127" height="32" fill="#fff"/>
<rect x="735" y="424" width="127" height="202" fill="#000"/>
<g stroke="#e02020" stroke-width="1.5" fill="none">
<rect x="762.5" y="491.5" width="76" height="71"/>
<path d="M781.5 473 V491.5 M819.5 473 V491.5 M781.5 562.5 V581 M819.5 562.5 V581 M743 510 H762.5 M743 543 H762.5 M838.5 510 H856 M838.5 543 H856"/>
</g>
<g fill="#e82020" font-family="Liberation Mono" stroke="#e82020" stroke-width="0.35">
<text x="775" y="490.5" font-size="10" textLength="5.5">8</text>
<text x="813" y="490.5" font-size="10" textLength="5.5">7</text>
<text x="756" y="508.5" font-size="10" textLength="5.5">4</text>
<text x="839.5" y="508" font-size="10" textLength="4">1</text>
<text x="756" y="541.5" font-size="10" textLength="5.5">2</text>
<text x="839.5" y="542" font-size="10" textLength="5.5">5</text>
<text x="775" y="573.5" font-size="10" textLength="5.5">3</text>
<text x="814.5" y="573.5" font-size="10" textLength="5.5">6</text>
<text x="778" y="502.5" font-size="8.5" textLength="11.5">Vcc</text>
<text x="812" y="502.5" font-size="8.5" textLength="13.5">Vref</text>
<text x="766" y="513.5" font-size="8.5" textLength="12">OUT</text>
<text x="813" y="513.5" font-size="8.5" textLength="23">Vsense</text>
<text x="781" y="529.5" font-size="11" textLength="35">ADP3811</text>
<text x="765" y="546.5" font-size="8.5" textLength="11.5">Vcs</text>
<text x="818" y="546.5" font-size="8.5" textLength="18">Vcntr</text>
<text x="773" y="559" font-size="9.5" textLength="19">COMP</text>
<text x="811" y="559" font-size="9.5" textLength="13.5">GND</text>
</g>
</svg>
<svg width="873" height="677" viewBox="0 0 873 677">
<!-- status panels -->
<g>
<rect x="8" y="631" width="76" height="37" fill="#f0f0f0"/>
<rect x="8" y="631" width="76" height="1" fill="#a0a0a0"/><rect x="8" y="631" width="1" height="37" fill="#a0a0a0"/>
<rect x="8" y="667" width="77" height="1" fill="#fff"/><rect x="84" y="631" width="1" height="37" fill="#fff"/>
<rect x="86" y="631" width="155" height="1" fill="#a0a0a0"/><rect x="86" y="631" width="1" height="37" fill="#a0a0a0"/>
<rect x="86" y="667" width="156" height="1" fill="#fff"/><rect x="241" y="631" width="1" height="37" fill="#fff"/>
<rect x="244" y="631" width="40" height="1" fill="#a0a0a0"/><rect x="244" y="631" width="1" height="37" fill="#a0a0a0"/>
<rect x="244" y="667" width="41" height="1" fill="#fff"/><rect x="284" y="631" width="1" height="37" fill="#fff"/>
<rect x="287" y="631" width="578" height="1" fill="#a0a0a0"/><rect x="287" y="631" width="1" height="37" fill="#a0a0a0"/>
<rect x="287" y="667" width="578" height="1" fill="#fff"/>
</g>
<rect x="132" y="633" width="95" height="18" fill="#000"/>
<g font-weight="bold" font-size="11">
<text x="134" y="645.3" fill="#e01818">M1</text>
<text x="153.5" y="645.3" fill="#fff">K1</text>
<text x="172" y="645.3" fill="#28b828">M2</text>
<text x="191.5" y="645.3" fill="#d0d0d0">K2</text>
<text x="211.5" y="645.3" fill="#f0f020" font-size="12">Ф</text>
</g>
<g fill="#fafafa" stroke-width="1.3">
<circle cx="140.5" cy="658.4" r="4.6" stroke="#e8e8e8"/>
<circle cx="159.8" cy="658.4" r="4.6" stroke="#e8e8e8"/>
<circle cx="178" cy="658.4" r="4.6" stroke="#e8e8e8"/>
<circle cx="197.1" cy="658.4" r="4.6" stroke="#e8e8e8"/>
<circle cx="216.4" cy="658.4" r="4.6" stroke="#e8e8e8"/>
</g>
<g fill="none" stroke="#707070" stroke-width="1.4">
<path d="M137.2 661.7 A4.6 4.6 0 0 1 143.8 655.1"/>
<path d="M156.5 661.7 A4.6 4.6 0 0 1 163.1 655.1"/>
<path d="M174.7 661.7 A4.6 4.6 0 0 1 181.3 655.1"/>
<path d="M193.8 661.7 A4.6 4.6 0 0 1 200.4 655.1"/>
<path d="M213.1 661.7 A4.6 4.6 0 0 1 219.7 655.1"/>
</g>
<circle cx="159.8" cy="658.4" r="1.8" fill="#000"/>
<!-- faint wire icon -->
<g fill="none" stroke="#e4e4e4" stroke-width="6.2" stroke-linecap="round">
<path d="M251.5 644 H256.5 L265 652"/>
</g>
<circle cx="267.7" cy="654" r="4.3" fill="none" stroke="#e4e4e4" stroke-width="3.6"/>
<g fill="none" stroke="#fdfdfd" stroke-width="4.4" stroke-linecap="round">
<path d="M251.5 644 H256.5 L265 652"/>
</g>
<circle cx="267.7" cy="654" r="4.1" fill="none" stroke="#fdfdfd" stroke-width="2.4"/>
<!-- resize grip -->
<path d="M852 668 L864 656 M856 668 L864 660 M860 668 L864 664" stroke="#a0a0a0" stroke-width="1.1"/>
</svg>
<svg width="873" height="677" viewBox="0 0 873 677">
<text x="30" y="22.5" font-size="11.7" textLength="88.5" fill="#000">Sprint-Layout 5.0</text>
<g font-size="11.7" fill="#000">
<text x="15" y="44" textLength="28">Файл</text>
<text x="58" y="44" textLength="49">Редактор</text>
<text x="122" y="44" textLength="39">Проект</text>
<text x="176" y="44" textLength="51">Действия</text>
<text x="241" y="44" textLength="36.7">Опции</text>
<text x="292.3" y="44" textLength="68.3">Регистрация</text>
<text x="375.5" y="44" textLength="48">Помощь</text>
</g>
<g fill="#000"><rect x="15" y="45" width="9" height="1"/><rect x="58" y="45" width="7" height="1"/><rect x="122" y="45" width="8" height="1"/><rect x="176" y="45" width="8" height="1"/><rect x="241" y="45" width="8" height="1"/><rect x="292.3" y="45" width="7" height="1"/><rect x="375.5" y="45" width="8" height="1"/></g>
<g font-size="11" fill="#10103a">
<text x="35" y="99" fill="#8a1c1c">Курсор</text>
<text x="35" y="121">Масштаб</text>
<text x="35" y="143">Проводник</text>
<text x="35" y="165">Контакт</text>
<text x="35" y="187">SMD-конт</text>
<text x="35" y="209">Круг/Дуга</text>
<text x="35" y="231">Полигон</text>
<text x="35" y="253">Фигура</text>
<text x="35" y="275">Текст</text>
<text x="35" y="297">Связи</text>
<text x="35" y="319">Автотрасса</text>
<text x="35" y="341">Контроль</text>
<text x="35" y="363">Измеритель</text>
<text x="35" y="385">Фотовид</text>
<text x="35" y="407">Маска</text>
</g>
<text x="36" y="447" font-size="11" fill="#000" textLength="57">0,15875 мм</text>
<g font-size="11" text-anchor="end">
<text x="84" y="471.5" fill="#fff">0.20</text>
<text x="84" y="492" fill="#e8e890">2.00</text>
<text x="84" y="508" fill="#e8e890">1.00</text>
<text x="84" y="530" fill="#e8e890">0.38</text>
<text x="84" y="546" fill="#e8e890">1.00</text>
</g>
<text x="107.8" y="97" font-size="11" fill="#000" textLength="15.3">мм</text>
<text x="116" y="620.7" font-size="11" fill="#000" textLength="39">Platine 1</text>
<!-- properties -->
<text x="625" y="96" font-size="11.5" font-weight="bold" fill="#b4bce8" textLength="54">Свойства</text>
<text x="625" y="127.3" font-size="11.5" font-weight="bold" fill="#000" textLength="63">Проводник</text>
<g font-size="11" fill="#000">
<text x="627" y="153.6" textLength="73">Ширина линии:</text>
<text x="658.5" y="170.6" fill="#e8e890" text-anchor="end">0.20</text>
<text x="677.3" y="170.6" fill="#404040" textLength="15">мм</text>
<text x="627" y="195.7" textLength="34">Длина:</text>
<text x="671" y="195.7" textLength="45.3">30,48 мм</text>
<text x="627" y="213.4" textLength="33.3">Узлов:</text>
<text x="671" y="213.4">5</text>
<text x="627" y="231.6" textLength="27">Imax*:</text>
<text x="671" y="231.6" textLength="36">0,667 A</text>
<text x="631.3" y="250.9" fill="#703030" textLength="57.7">* (35µ / 20°)</text>
<text x="644.6" y="276.9" fill="#a0a0a0" textLength="57.3">Без зазора</text>
</g>
<text x="764.3" y="96" font-size="11.5" font-weight="bold" fill="#dc2222" textLength="68.3">Библиотека</text>
<text x="756.7" y="118.8" font-size="11" fill="#000" textLength="19.3">PCB</text>
<text x="756.7" y="134.6" font-size="11" fill="#000" textLength="22.3">SHM</text>
<text x="738" y="621" font-size="11" fill="#d8d8d8" textLength="108">Нажать и перетянуть</text>
<!-- status -->
<g font-size="11" fill="#000">
<text x="13.7" y="646.6">X:</text>
<text x="32.5" y="646.6" textLength="46">15,44 мм</text>
<text x="13.7" y="661.7">Y:</text>
<text x="32.5" y="661.7" textLength="46">14,62 мм</text>
<text x="92.9" y="645.6" textLength="33.4">видим.</text>
<text x="93.8" y="662.5" textLength="30.2">актив.</text>
<text x="233" y="654.3">?</text>
</g>
<g font-size="11" fill="#0a0a50">
<text x="293.6" y="645.6" textLength="355.3">Курсор: Выделение, перемещение, копрование, вставка и удаление.</text>
<text x="293.2" y="658.4" textLength="118.3">&lt;Колесико&gt; = Масштаб</text>
</g>
</svg>
</body></html>
